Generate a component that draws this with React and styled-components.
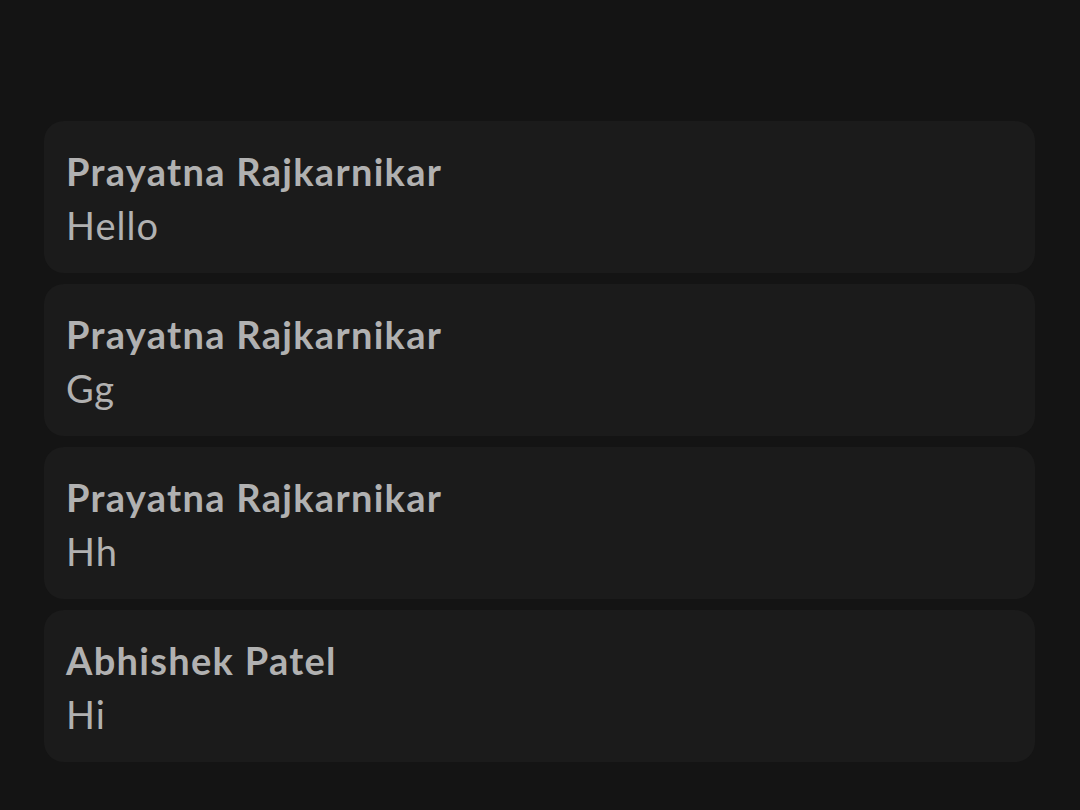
import styled, { createGlobalStyle } from 'styled-components';

const GlobalStyle = createGlobalStyle`
   html, body {
      margin: 0;
      padding: 0;
      background: #141414;
   }
   body {
      font-family: Lato, "Noto Sans", sans-serif;
   }
`;

const Page = styled.div`
   min-height: 810px;
   box-sizing: border-box;
   padding: 121px 45px 0 44px;
   display: flex;
   flex-direction: column;
   gap: 11px;
`;

const Card = styled.div`
   height: 152px;
   box-sizing: border-box;
   padding: 23px 22px 0;
   background: #1b1b1b;
   border-radius: 20px;
   color: #b1b1b1;
`;

const Name = styled.div`
   font-size: 38px;
   font-weight: 700;
   line-height: 54px;
   letter-spacing: 1.3px;
`;

const Message = styled.div`
   font-size: 38px;
   font-weight: 400;
   line-height: 54px;
   letter-spacing: 1px;
`;

const messages = [
   { name: 'Prayatna Rajkarnikar', text: 'Hello' },
   { name: 'Prayatna Rajkarnikar', text: 'Gg' },
   { name: 'Prayatna Rajkarnikar', text: 'Hh' },
   { name: 'Abhishek Patel', text: 'Hi' },
];

function App() {
   return (
      <>
         <GlobalStyle />
         <Page>
            {messages.map((m, i) => (
               <Card key={i}>
                  <Name>{m.name}</Name>
                  <Message>{m.text}</Message>
               </Card>
            ))}
         </Page>
      </>
   );
}

export default App;
